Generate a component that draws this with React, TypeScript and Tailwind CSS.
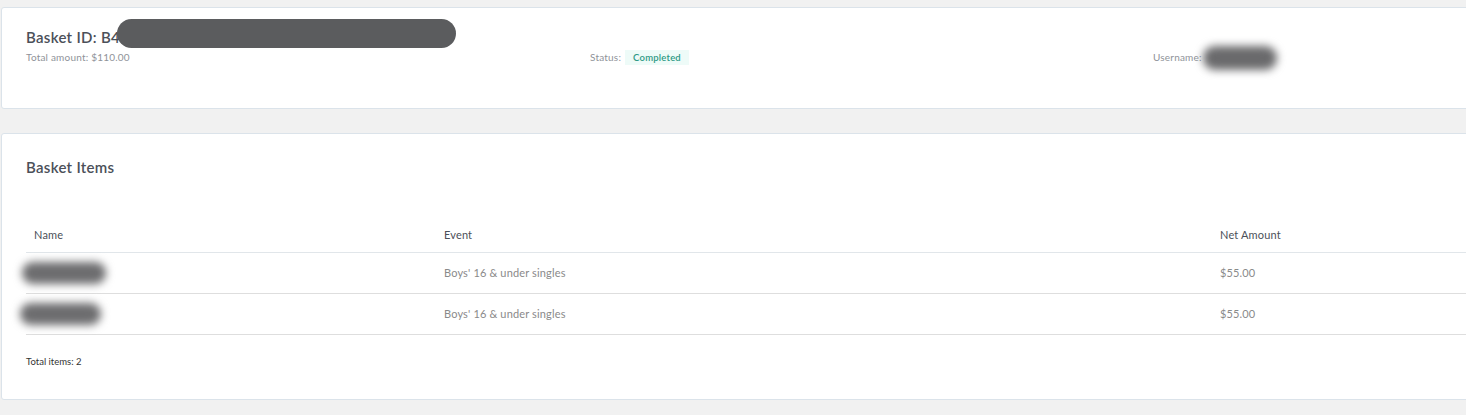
export default function App() {
  const items = [
    { id: 1, event: "Boys' 16 & under singles", amount: "$55.00", blob: "ml-[-12px] w-[84px]" },
    { id: 2, event: "Boys' 16 & under singles", amount: "$55.00", blob: "ml-[-14px] w-[81px]" },
  ];

  return (
    <main
      className="min-h-[415px] w-full overflow-hidden bg-[#f1f1f1] pt-[7px] pb-4 pl-px"
      style={{ fontFamily: "Lato, 'Noto Sans', sans-serif" }}
    >
      {/* basket summary */}
      <section className="h-[102px] w-[1520px] rounded-[3px] border border-[#dbe3ea] bg-white pl-[24px] pt-[19px]">
        <div className="relative">
          <h1 className="text-[15px] leading-5 font-semibold tracking-[0.3px] text-[#4b5059]">
            Basket ID: B4
          </h1>
          <div className="absolute left-[91px] top-[-8px] h-[29px] w-[339px] rounded-full bg-[#5b5c5e]" />
        </div>
        <div className="mt-[3px] grid grid-cols-[564px_563px_563px] text-[10px] leading-[15px] tracking-[0.2px] text-[#8f9399]">
          <div>Total amount: $110.00</div>
          <div className="flex items-center gap-[4px]">
            <span>Status:</span>
            <span className="bg-[#eefbf8] px-[8px] text-[9.5px] font-semibold text-[#2f9a86]">
              Completed
            </span>
          </div>
          <div className="relative flex items-center">
            <span>Username:</span>
            <div className="absolute left-[50px] top-[-4px] h-[24px] w-[74px] rounded-full bg-[#6a6a6c] blur-[4px]" />
          </div>
        </div>
      </section>

      {/* basket items */}
      <section className="mt-6 h-[267px] w-[1520px] rounded-[3px] border border-[#dbe3ea] bg-white pl-[24px] pt-[23px]">
        <h2 className="text-[15px] leading-5 font-semibold tracking-[0.3px] text-[#4b5059]">
          Basket Items
        </h2>

        <div className="mt-[41px] w-[1494px] text-[11px] tracking-[0.15px]">
          <div className="grid h-[35px] grid-cols-[410px_776px_1fr] items-center border-b border-[#e1e6ea] text-[#4b5059]">
            <div className="pl-2">Name</div>
            <div className="pl-2">Event</div>
            <div className="pl-2">Net Amount</div>
          </div>
          {items.map((item) => (
            <div
              key={item.id}
              className="grid h-[41px] grid-cols-[410px_776px_1fr] items-center border-b border-[#dedede] text-[#8a8a8a]"
            >
              <div className="pl-2">
                <div className={`h-[22px] rounded-full bg-[#6d6d6f] blur-[4px] ${item.blob}`} />
              </div>
              <div className="pl-2">{item.event}</div>
              <div className="pl-2">{item.amount}</div>
            </div>
          ))}
        </div>

        <p className="mt-[20px] text-[9.5px] leading-[14px] text-[#333]">Total items: 2</p>
      </section>
    </main>
  );
}
